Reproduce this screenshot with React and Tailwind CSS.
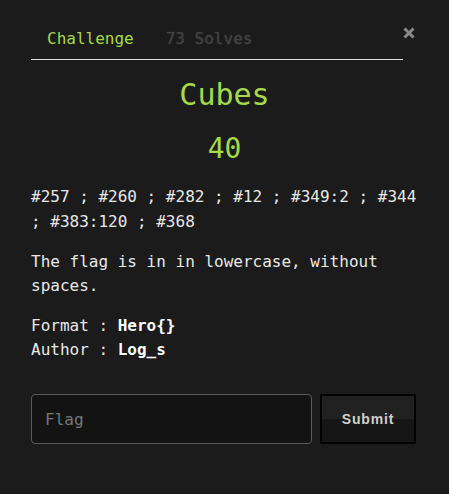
export default function App() {
  const mono = { fontFamily: '"DejaVu Sans Mono", monospace' };

  return (
    <div className="min-h-screen w-full bg-[#1b1b1b] text-[#e8e8e8]" style={mono}>
      <div className="relative px-[31px] pt-[19px] pb-10">
        <button className="absolute right-[34px] top-[27px] w-3 h-3">
          <svg viewBox="0 0 12 12" width="12" height="12">
            <path d="M1.5 1.5 L10.5 10.5 M10.5 1.5 L1.5 10.5" stroke="#8a8a8a" strokeWidth="3" fill="none" />
          </svg>
        </button>

        <nav className="flex mr-[15px] border-b border-[#e0e0e0] text-base leading-6">
          <span className="px-4 pt-2 pb-2 text-[#a6d84b]">Challenge</span>
          <span className="px-4 pt-2 pb-2 text-[#444] [text-shadow:0_0_2px_#333]">73 Solves</span>
        </nav>

        <h2 className="mt-[12px] text-center text-[30px] leading-[45px] text-[#a6d84b]">Cubes</h2>
        <h3 className="mt-[11px] text-center text-[28px] leading-[42px] text-[#a6d84b]">40</h3>

        <div className="mt-[15px] text-base leading-[24.5px]">
          <p className="mb-4">#257 ; #260 ; #282 ; #12 ; #349:2 ; #344 ; #383:120 ; #368</p>
          <p className="mb-4 leading-6">The flag is in in lowercase, without spaces.</p>
          <p className="leading-6">
            Format : <strong className="font-bold text-white">Hero{"{}"}</strong>
            <br />
            Author : <strong className="font-bold text-white">Log_s</strong>
          </p>
        </div>

        <div className="mt-[32px] mr-[2px] flex gap-2">
          <input
            placeholder="Flag"
            className="flex-1 h-[50px] rounded-[4px] border border-[#5a5a5a] bg-[#131313] px-[13px] text-base text-white placeholder:text-[#777] outline-none"
            style={mono}
          />
          <button
            className="w-[96px] h-[50px] border-2 border-black bg-[linear-gradient(#212121_50%,#161616_50%)] text-[14px] font-bold tracking-[0.06em] text-[#cfcfcf]"
            style={{ fontFamily: '"Liberation Sans", Arial, sans-serif' }}
          >
            Submit
          </button>
        </div>
      </div>
    </div>
  );
}
